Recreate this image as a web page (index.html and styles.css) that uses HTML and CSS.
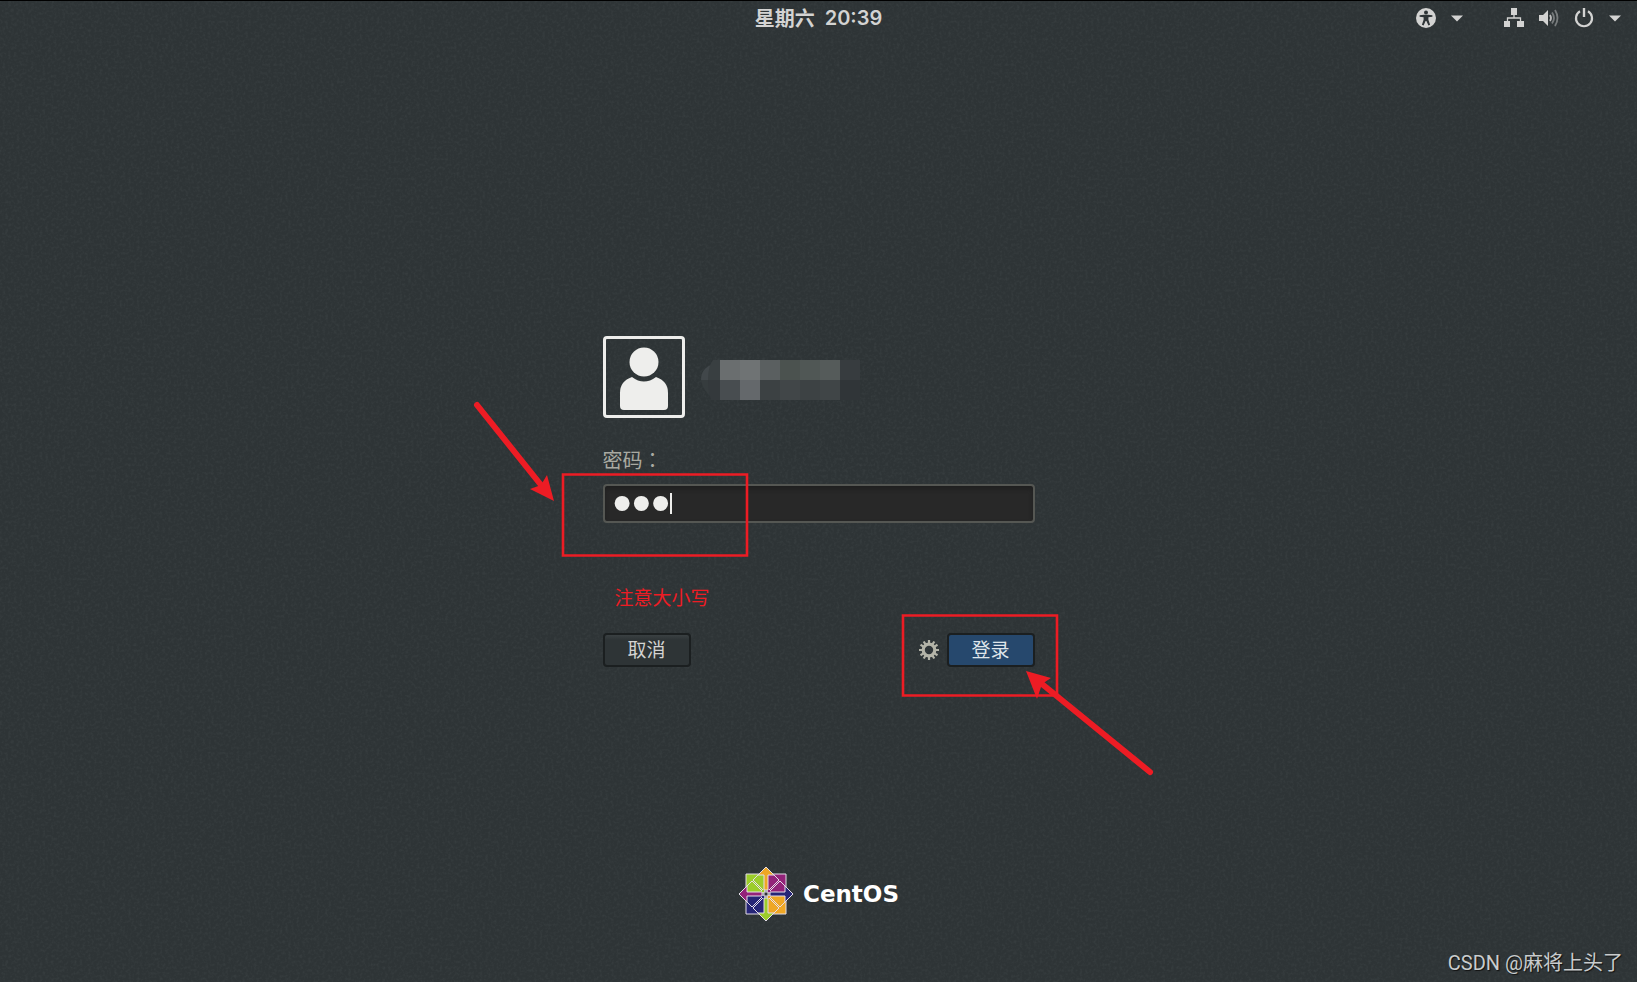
FILE: index.html
```html
<!DOCTYPE html>
<html lang="zh-CN">
<head>
<meta charset="utf-8">
<title>CentOS</title>
<link rel="stylesheet" href="styles.css">
</head>
<body>
<svg class="grain" aria-hidden="true"><filter id="grain"><feTurbulence type="fractalNoise" baseFrequency="0.35" numOctaves="2" seed="4"/><feColorMatrix values="0 0 0 0 0.55  0 0 0 0 0.62  0 0 0 0 0.62  1.2 0 0 0 -0.5"/></filter><rect width="100%" height="100%" filter="url(#grain)"/></svg>
<header class="topbar">
  <span></span>
  <time class="clock">星期六 <span class="digits">20:39</span></time>
  <div class="tray">
    <button class="tray-button" aria-label="辅助功能">
      <svg width="20" height="20" viewBox="0 0 20 20"><circle cx="10" cy="10" r="10" fill="#d3d3d2"/><circle cx="10" cy="4.4" r="2" fill="#2e3436"/><path d="M3.6 7.2 8 6.8h4l4.4.4v1.6l-4 .5v2.5l1.7 5-1.7.6L10.4 13h-.8l-2 4.4-1.7-.6 1.7-5V9.3l-4-.5z" fill="#2e3436"/></svg>
      <svg width="12" height="7" viewBox="0 0 12 7"><path d="M0 .5h12L6 6.5z" fill="#d3d3d2"/></svg>
    </button>
    <button class="tray-button" aria-label="系统">
      <svg width="20" height="20" viewBox="0 0 20 20"><path d="M7 0h6v7H7zM0 13h6v6H0zM13 13h7v6h-7z" fill="#d3d3d2"/><path d="M10 7v3M3.5 13v-3h13v3" fill="none" stroke="#d3d3d2" stroke-width="1.3"/></svg>
      <svg width="20" height="18" viewBox="0 0 20 18"><path d="M0 6h4l5-5v16l-5-5H0z" fill="#d3d3d2"/><path d="M11 6q2 3 0 6" fill="none" stroke="#bbb" stroke-width="1.8"/><path d="M13 3.500q4 5.500 0 11M16 1q5 8 0 16" fill="none" stroke="#777b7c" stroke-width="1.8"/></svg>
      <svg width="20" height="20" viewBox="0 0 20 20"><path d="M6 3.300a8 8 0 1 0 8 0" fill="none" stroke="#d3d3d2" stroke-width="2.2"/><path d="M10 0v9" stroke="#d3d3d2" stroke-width="2.4"/></svg>
      <svg width="12" height="7" viewBox="0 0 12 7"><path d="M0 .5h12L6 6.5z" fill="#d3d3d2"/></svg>
    </button>
  </div>
</header>
<main class="stage">
  <form class="login">
    <div class="user">
      <div class="avatar"><svg width="76" height="76" viewBox="0 0 76 76"><circle cx="38" cy="23" r="14.5" fill="#eeeeec"/><path d="M26 38q12 9 24 0 12 4 12 16v13q0 4-4 4H18q-4 0-4-4V54q0-12 12-16z" fill="#eeeeec"/></svg></div>
      <svg class="mosaic" width="160" height="40" viewBox="0 0 160 40"><path d="M12 4Q0 8 0 20h12z" fill="#41474a"/><path d="M0 20h12v17Q2 32 0 20z" fill="#363c3e"/><path d="M12 0h7v20H7Q7 6 12 0z" fill="#393f41"/><path d="M7 20h12v20h-9Q7 32 7 20z" fill="#34393c"/><path d="M19 0h20v20H19z" fill="#6a6e6f"/><path d="M39 0h20v20H39z" fill="#6f7374"/><path d="M59 0h20v20H59z" fill="#5a5f60"/><path d="M79 0h20v20H79z" fill="#4b524f"/><path d="M99 0h20v20H99z" fill="#505755"/><path d="M119 0h20v20h-20z" fill="#555b5a"/><path d="M139 0h20v20h-20z" fill="#373c3f"/><path d="M19 20h20v20H19z" fill="#484d50"/><path d="M39 20h20v20H39z" fill="#64686b"/><path d="M59 20h20v20H59z" fill="#3c4143"/><path d="M79 20h20v20H79z" fill="#414648"/><path d="M99 20h20v20H99z" fill="#3d4244"/><path d="M119 20h20v20h-20z" fill="#404547"/><path d="M139 20h20v20h-20z" fill="#303538"/></svg>
    </div>
    <label class="label" for="password">密码<span class="colon" lang="zh-TW">：</span></label>
    <div class="field">
      <input class="password" id="password" type="password" value="abc">
      <i class="caret"></i>
    </div>
    <p class="note">注意大小写</p>
    <div class="actions">
      <button class="button" type="button">取消</button>
      <div class="submit">
        <button class="gear" type="button" aria-label="会话"><svg width="20" height="20" viewBox="-10 -10 20 20"><circle r="5.8" fill="none" stroke="#b4b4a8" stroke-width="3.2"/><g stroke="#b4b4a8" stroke-width="2.2"><path d="M0-10v4M0 10V6M-10 0h4M10 0H6"/><path d="M0-10v4M0 10V6M-10 0h4M10 0H6" transform="rotate(32)"/><path d="M0-10v4M0 10V6M-10 0h4M10 0H6" transform="rotate(58)"/></g></svg></button>
        <button class="button primary" type="submit">登录</button>
      </div>
    </div>
    <svg class="marks" viewBox="0 0 700 400" width="700" height="400" aria-hidden="true">
      <g fill="none" stroke="#ed1c24" stroke-width="2.6"><path d="M104 98.500h184v81h-184z"/><path d="M444 239.500h154v80h-154z"/></g>
      <g stroke="#ed1c24" stroke-width="6" stroke-linecap="round"><path d="M18 29 82 109M691 396 583 308"/></g>
      <path d="M95 125 88 99 82 109 71 113zM567 295l25 7-9 6-5 15z" fill="#ed1c24"/>
    </svg>
  </form>
</main>
<footer class="brand">
  <svg width="56" height="56" viewBox="-28 -28 56 56">
    <g stroke="#e4dde8" stroke-width="1">
      <path d="M-20-20H-1V-1H-20z" fill="#9ccd2a"/><path d="M1-20h19V-1H1z" fill="#932279"/><path d="M1 1h19v19H1z" fill="#efa724"/><path d="M-20 1H-1v19h-19z" fill="#262577"/>
      <g fill="#efa724"><path d="M0-27 8-19H2V-4H-2V-19H-8z"/><path d="M-8-19-13-14-3-4M8-19l5 5L3-4" fill="none"/></g>
      <g fill="#262577" transform="rotate(90)"><path d="M0-27 8-19H2V-4H-2V-19H-8z"/><path d="M-8-19-13-14-3-4M8-19l5 5L3-4" fill="none"/></g>
      <g fill="#9ccd2a" transform="rotate(180)"><path d="M0-27 8-19H2V-4H-2V-19H-8z"/><path d="M-8-19-13-14-3-4M8-19l5 5L3-4" fill="none"/></g>
      <g fill="#932279" transform="rotate(270)"><path d="M0-27 8-19H2V-4H-2V-19H-8z"/><path d="M-8-19-13-14-3-4M8-19l5 5L3-4" fill="none"/></g>
      <path d="M-2-2h4v4h-4z" fill="#2e3436"/>
    </g>
  </svg>
  <span>CentOS</span>
</footer>
<div class="watermark">CSDN @麻将上头了</div>
</body>
</html>
```
FILE: styles.css
```css
* { box-sizing: border-box; }
body {
  margin: 0;
  min-height: 100vh;
  display: flex;
  flex-direction: column;
  position: relative;
  overflow: hidden;
  border-top: 1px solid #000;
  background: #2e3436;
  color: #d3d3d2;
  font: 20px/24px "Noto Sans CJK SC", sans-serif;
}
button { border: 0; padding: 0; background: none; color: inherit; font: inherit; }
svg { display: block; flex: none; }
.grain { position: absolute; inset: 0; width: 100%; height: 100%; opacity: 0.1; z-index: -1; }
.topbar {
  display: grid;
  grid-template-columns: 1fr auto 1fr;
  align-items: center;
  height: 34px;
  padding: 0 16px;
}
.clock { display: flex; gap: 10px; font-weight: 700; }
.digits { font-family: Inter, sans-serif; font-weight: 600; }
.tray { display: flex; justify-content: flex-end; gap: 41px; }
.tray-button { display: flex; align-items: center; gap: 15px; }
.stage {
  flex: 1;
  display: flex;
  align-items: center;
  justify-content: center;
  padding-top: 101px;
}
.login { position: relative; width: 432px; }
.user { display: flex; align-items: center; gap: 16px; }
.avatar { width: 82px; height: 82px; border: 3px solid #eeeeec; border-radius: 4px; }
.mosaic { margin-top: 6px; }
.label { display: block; margin-top: 30px; color: #a9aaa2; }
.colon { font-family: "Noto Sans CJK TC", sans-serif; }
.field { position: relative; margin-top: 12px; }
.password {
  display: block;
  width: 100%;
  height: 39px;
  padding: 0 8px;
  border: 2px solid #555753;
  border-radius: 4px;
  outline: 0;
  background: #282828;
  box-shadow: inset 0 3px 4px #1f1f1f;
  color: #eeeeec;
  font: 55px/35px "Liberation Sans", sans-serif;
}
.caret { position: absolute; left: 67px; top: 9px; width: 2px; height: 21px; background: #eeeeec; }
.note { margin: 62px 0 0 12px; color: #ed1c24; font-size: 19px; }
.actions { display: flex; justify-content: space-between; margin-top: 24px; }
.submit { display: flex; align-items: center; gap: 8px; }
.button {
  width: 88px;
  height: 34px;
  padding-bottom: 2px;
  border: 2px solid #1b1f20;
  border-radius: 4px;
  background: linear-gradient(#3a4042, #2e3436 5px);
  font-size: 19px;
  line-height: 28px;
}
.primary { background: #26486d; color: #dfe5ea; }
.marks { position: absolute; left: -144px; top: 40px; pointer-events: none; }
.brand {
  display: flex;
  align-items: center;
  justify-content: center;
  gap: 9px;
  padding-bottom: 60px;
  color: #fff;
  font: 700 23px/56px "DejaVu Sans", sans-serif;
}
.watermark {
  position: absolute;
  right: 14px;
  bottom: 7px;
  color: #c9cccd;
  font-family: Roboto, "Noto Sans CJK SC", sans-serif;
  text-shadow: 1px 1px 1px #111;
}
```
